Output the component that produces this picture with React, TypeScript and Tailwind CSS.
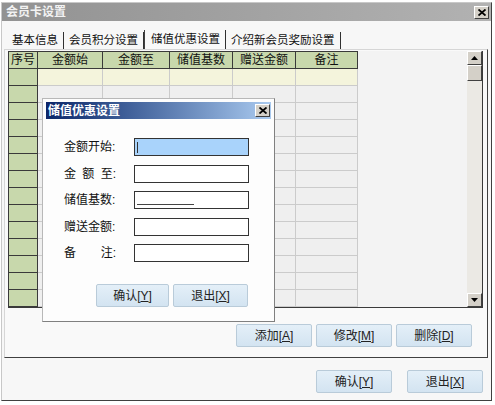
import React from "react";

const colW = ["w-[30px]", "w-[65px]", "w-[67px]", "w-[63px]", "w-[63px]", "w-[62px]"];
const heads = ["序号", "金额始", "金额至", "储值基数", "赠送金额", "备注"];
const rows = Array.from({ length: 14 }, (_, i) => i);

function Btn({ label, k, w = "w-[76px]" }: { label: string; k: string; w?: string }) {
  return (
    <div
      className={`${w} h-[23px] flex items-center justify-center rounded-[2px] border border-[#b9cbd9] bg-linear-to-b from-[#e4eff8] to-[#d3e4f1] text-[12px] text-[#222] leading-none`}
    >
      {label}[<span className="underline">{k}</span>]
    </div>
  );
}

function CloseBox() {
  return (
    <div className="w-[15px] h-[13px] bg-[#d4d0c8] border border-white border-r-[#404040] border-b-[#404040] flex items-center justify-center">
      <svg width="8" height="7" viewBox="0 0 8 7">
        <path d="M0.5 0.5 L7.5 6.5 M7.5 0.5 L0.5 6.5" stroke="#000" strokeWidth="1.8" />
      </svg>
    </div>
  );
}

function Arrow({ up }: { up?: boolean }) {
  return (
    <div className="h-[14px] bg-[#d4d0c8] border border-white border-r-[#404040] border-b-[#404040] flex items-center justify-center">
      <svg width="7" height="4" viewBox="0 0 7 4">
        <path d={up ? "M0 4 L3.5 0 L7 4 Z" : "M0 0 L3.5 4 L7 0 Z"} fill="#000" />
      </svg>
    </div>
  );
}

function Tab({ label, active }: { label: string; active?: boolean }) {
  return (
    <div
      className={`${active ? "h-[19px] bg-[#f9f9f9] border-l border-l-[#404040] pl-[6px] pr-[5px]" : "h-[17px] px-[5px]"} flex items-center border-r border-r-[#303030] text-[11.5px] leading-none text-[#111]`}
    >
      {label}
    </div>
  );
}

function Grid() {
  return (
    <div className="flex w-[475px] h-[257px] border-r border-b border-[#3a3a3a]">
      <div className="flex flex-col w-[350px]">
        <div className="flex h-[18px]">
          {heads.map((h, c) => (
            <div
              key={h}
              className={`${colW[c]} ${c === 0 ? "border-l" : ""} border-t border-r border-b border-[#3a3a3a] bg-[#c8d8ac] flex items-center justify-center text-[12px] leading-none text-[#111]`}
            >
              {h}
            </div>
          ))}
        </div>
        {rows.map((r) => (
          <div key={r} className="flex h-[17px]">
            {colW.map((w, c) =>
              c === 0 ? (
                <div key={c} className={`${w} border-l border-r border-b border-[#3a3a3a] bg-[#c8d8ac]`} />
              ) : (
                <div
                  key={c}
                  className={`${w} border-r border-b border-[#cbcbcb] ${r === 0 ? "bg-[#f4f4dc]" : "bg-[#efefef]"}`}
                />
              )
            )}
          </div>
        ))}
      </div>
      <div className="flex-1 bg-[#f3f3f3]" />
      <div className="w-[15px] flex flex-col">
        <Arrow up />
        <div className="h-[16px] bg-[#d4d0c8] border border-white border-r-[#404040] border-b-[#404040]" />
        <div className="flex-1 bg-[#ebe9e4]" />
        <Arrow />
      </div>
    </div>
  );
}

function Field({ label, children }: { label: string[]; children?: React.ReactNode }) {
  return (
    <div className="flex items-center h-[18px]">
      <div className="w-[52px] ml-[18px] flex justify-between text-[12px] leading-none text-[#111]">
        {label.map((t, i) => (
          <span key={i}>{t}</span>
        ))}
      </div>
      <div className="ml-[18px] w-[115px] h-[18px] border border-[#333] bg-white relative">{children}</div>
    </div>
  );
}

function Dialog() {
  return (
    <div className="absolute left-[42px] top-[98px] w-[233px] h-[224px] bg-[#fdfdfd] border border-[#b8b8b8] border-r-[#808080] border-b-[#808080] p-[3px] flex flex-col">
      <div className="h-[17px] flex items-center justify-between pl-[2px] pr-[1px] bg-linear-to-r from-[#0c2669] to-[#aacaef]">
        <span className="text-[12px] font-bold text-white leading-none">储值优惠设置</span>
        <CloseBox />
      </div>
      <div className="mt-[19px] flex flex-col gap-[8.5px]">
        <Field label={["金额开始:"]}>
          <div className="absolute inset-0 bg-[#a9d3fb]" />
          <div className="absolute left-[2px] top-[3px] w-[1px] h-[11px] bg-[#333]" />
        </Field>
        <Field label={["金", "额", "至:"]} />
        <Field label={["储值基数:"]}>
          <div className="absolute left-[2px] bottom-[3px] w-[57px] h-[1px] bg-[#444]" />
        </Field>
        <Field label={["赠送金额:"]} />
        <Field label={["备", "注:"]} />
      </div>
      <div className="mt-[22px] ml-[50px] flex gap-[4px]">
        <Btn label="确认" k="Y" w="w-[73px]" />
        <Btn label="退出" k="X" w="w-[75px]" />
      </div>
    </div>
  );
}

export default function App() {
  return (
    <div className="relative w-[495px] h-[405px] bg-white font-['Liberation_Sans','Noto_Sans_CJK_SC',sans-serif]">
      <div className="absolute left-[1px] top-[2px] w-[491px] h-[399px] bg-[#f7f7f7] border border-[#c8c8c8] border-r-[#404040] border-b-[#404040] flex flex-col">
        <div className="h-[18px] flex items-center justify-between pl-[4px] pr-[2px] bg-linear-to-r from-[#929292] to-[#b2b2b2]">
          <span className="text-[12px] font-bold text-[#f2f2f2] leading-none">会员卡设置</span>
          <CloseBox />
        </div>
        <div className="h-[28px] flex items-end pl-[5px]">
          <Tab label="基本信息" />
          <Tab label="会员积分设置" />
          <Tab label="储值优惠设置" active />
          <Tab label="介绍新会员奖励设置" />
        </div>
        <div className="ml-[2px] w-[484px] h-[309px] bg-[#f9f9f9] border border-[#d6d6d6] border-r-[#404040] border-b-[#404040] flex flex-col">
          <div className="mt-[1px] ml-[3px]">
            <Grid />
          </div>
          <div className="mt-[16px] pr-[15px] flex justify-end gap-[4px]">
            <Btn label="添加" k="A" />
            <Btn label="修改" k="M" />
            <Btn label="删除" k="D" />
          </div>
        </div>
        <div className="mt-[12px] pr-[8px] flex justify-end gap-[15px]">
          <Btn label="确认" k="Y" />
          <Btn label="退出" k="X" />
        </div>
      </div>
      <Dialog />
    </div>
  );
}
